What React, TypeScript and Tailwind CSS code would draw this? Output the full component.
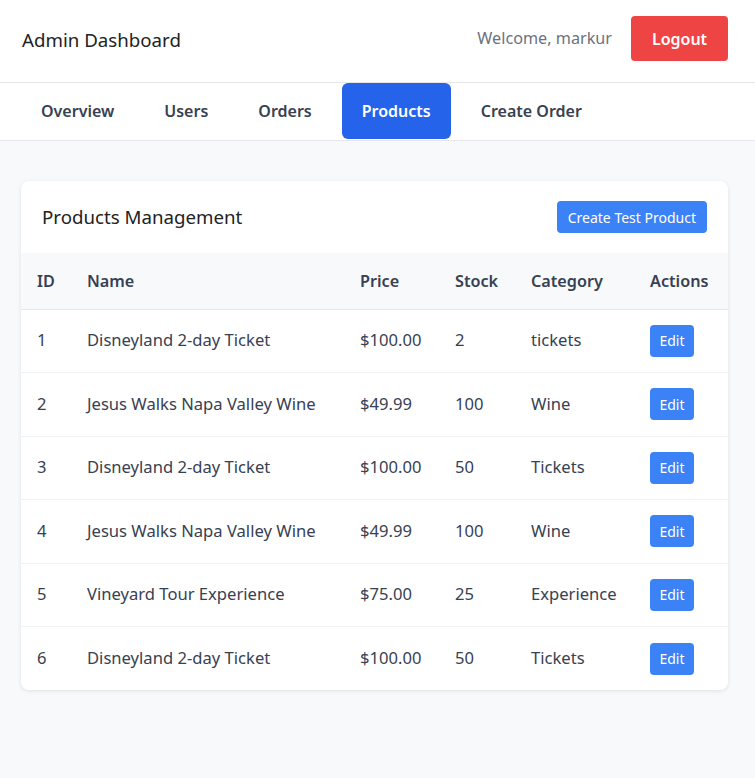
import React from 'react';

const products = [
  { id: 1, name: 'Disneyland 2-day Ticket', price: '$100.00', stock: 2, category: 'tickets' },
  { id: 2, name: 'Jesus Walks Napa Valley Wine', price: '$49.99', stock: 100, category: 'Wine' },
  { id: 3, name: 'Disneyland 2-day Ticket', price: '$100.00', stock: 50, category: 'Tickets' },
  { id: 4, name: 'Jesus Walks Napa Valley Wine', price: '$49.99', stock: 100, category: 'Wine' },
  { id: 5, name: 'Vineyard Tour Experience', price: '$75.00', stock: 25, category: 'Experience' },
  { id: 6, name: 'Disneyland 2-day Ticket', price: '$100.00', stock: 50, category: 'Tickets' },
];

const tabs = ['Overview', 'Users', 'Orders', 'Products', 'Create Order'];

export default function App(): React.ReactElement {
  return (
    <div className="min-h-[778px] bg-[#f8f9fa] font-['Noto_Sans',sans-serif] text-[#374151]">
      {/* top bar */}
      <header className="h-[83px] bg-white border-b border-[#e5e7eb] flex items-start justify-between pl-[22px] pr-[27px] pt-[16px]">
        <h1 className="text-[18.7px] leading-[48px] text-[#222]">Admin Dashboard</h1>
        <div className="flex items-center gap-[19px]">
          <span className="text-[16.2px] text-[#6b7280]">Welcome, markur</span>
          <button className="h-[45px] w-[97px] bg-[#ef4444] text-white text-[16px] font-semibold rounded-[4px]">
            Logout
          </button>
        </div>
      </header>

      {/* tabs */}
      <nav className="h-[58px] bg-white border-b border-[#e5e7eb] flex pl-[21px] gap-[10px]">
        {tabs.map((t) => (
          <button
            key={t}
            className={
              t === 'Products'
                ? 'h-[56px] px-[20px] rounded-[6px] bg-[#2563eb] text-white text-[16px] font-semibold'
                : 'h-[56px] px-[20px] text-[#374151] text-[16px] font-semibold'
            }
          >
            {t}
          </button>
        ))}
      </nav>

      <main className="pl-[21px] pr-[27px] pt-[40px]">
        <div className="bg-white rounded-[8px] shadow-[0_1px_4px_rgba(0,0,0,0.1)] overflow-hidden">
          <div className="h-[72px] flex items-center justify-between px-[21px]">
            <h2 className="text-[18.7px] text-[#222]">Products Management</h2>
            <button className="h-[32px] px-[11px] bg-[#3b82f6] text-white text-[14px] rounded-[4px]">
              Create Test Product
            </button>
          </div>
          <table className="w-full table-fixed border-collapse text-[16.6px]">
            <colgroup>
              <col className="w-[50px]" />
              <col className="w-[273px]" />
              <col className="w-[95px]" />
              <col className="w-[76px]" />
              <col className="w-[119px]" />
              <col className="w-[94px]" />
            </colgroup>
            <thead>
              <tr className="bg-[#f8f9fa] border-b border-[#e5e7eb]">
                {['ID', 'Name', 'Price', 'Stock', 'Category', 'Actions'].map((h) => (
                  <th key={h} className="h-[56px] px-[16px] text-left text-[16.2px] font-semibold text-[#374151] whitespace-nowrap">
                    {h}
                  </th>
                ))}
              </tr>
            </thead>
            <tbody>
              {products.map((p, i) => (
                <tr key={p.id} className={i < products.length - 1 ? 'border-b border-[#f0f1f3]' : ''}>
                  <td className="h-[63.5px] px-[16px]">{p.id}</td>
                  <td className="px-[16px] whitespace-nowrap">{p.name}</td>
                  <td className="px-[16px]">{p.price}</td>
                  <td className="px-[16px]">{p.stock}</td>
                  <td className="px-[16px]">{p.category}</td>
                  <td className="px-[16px]">
                    <button className="h-[32px] w-[44px] bg-[#3b82f6] text-white text-[14px] rounded-[4px]">Edit</button>
                  </td>
                </tr>
              ))}
            </tbody>
          </table>
        </div>
      </main>
    </div>
  );
}
